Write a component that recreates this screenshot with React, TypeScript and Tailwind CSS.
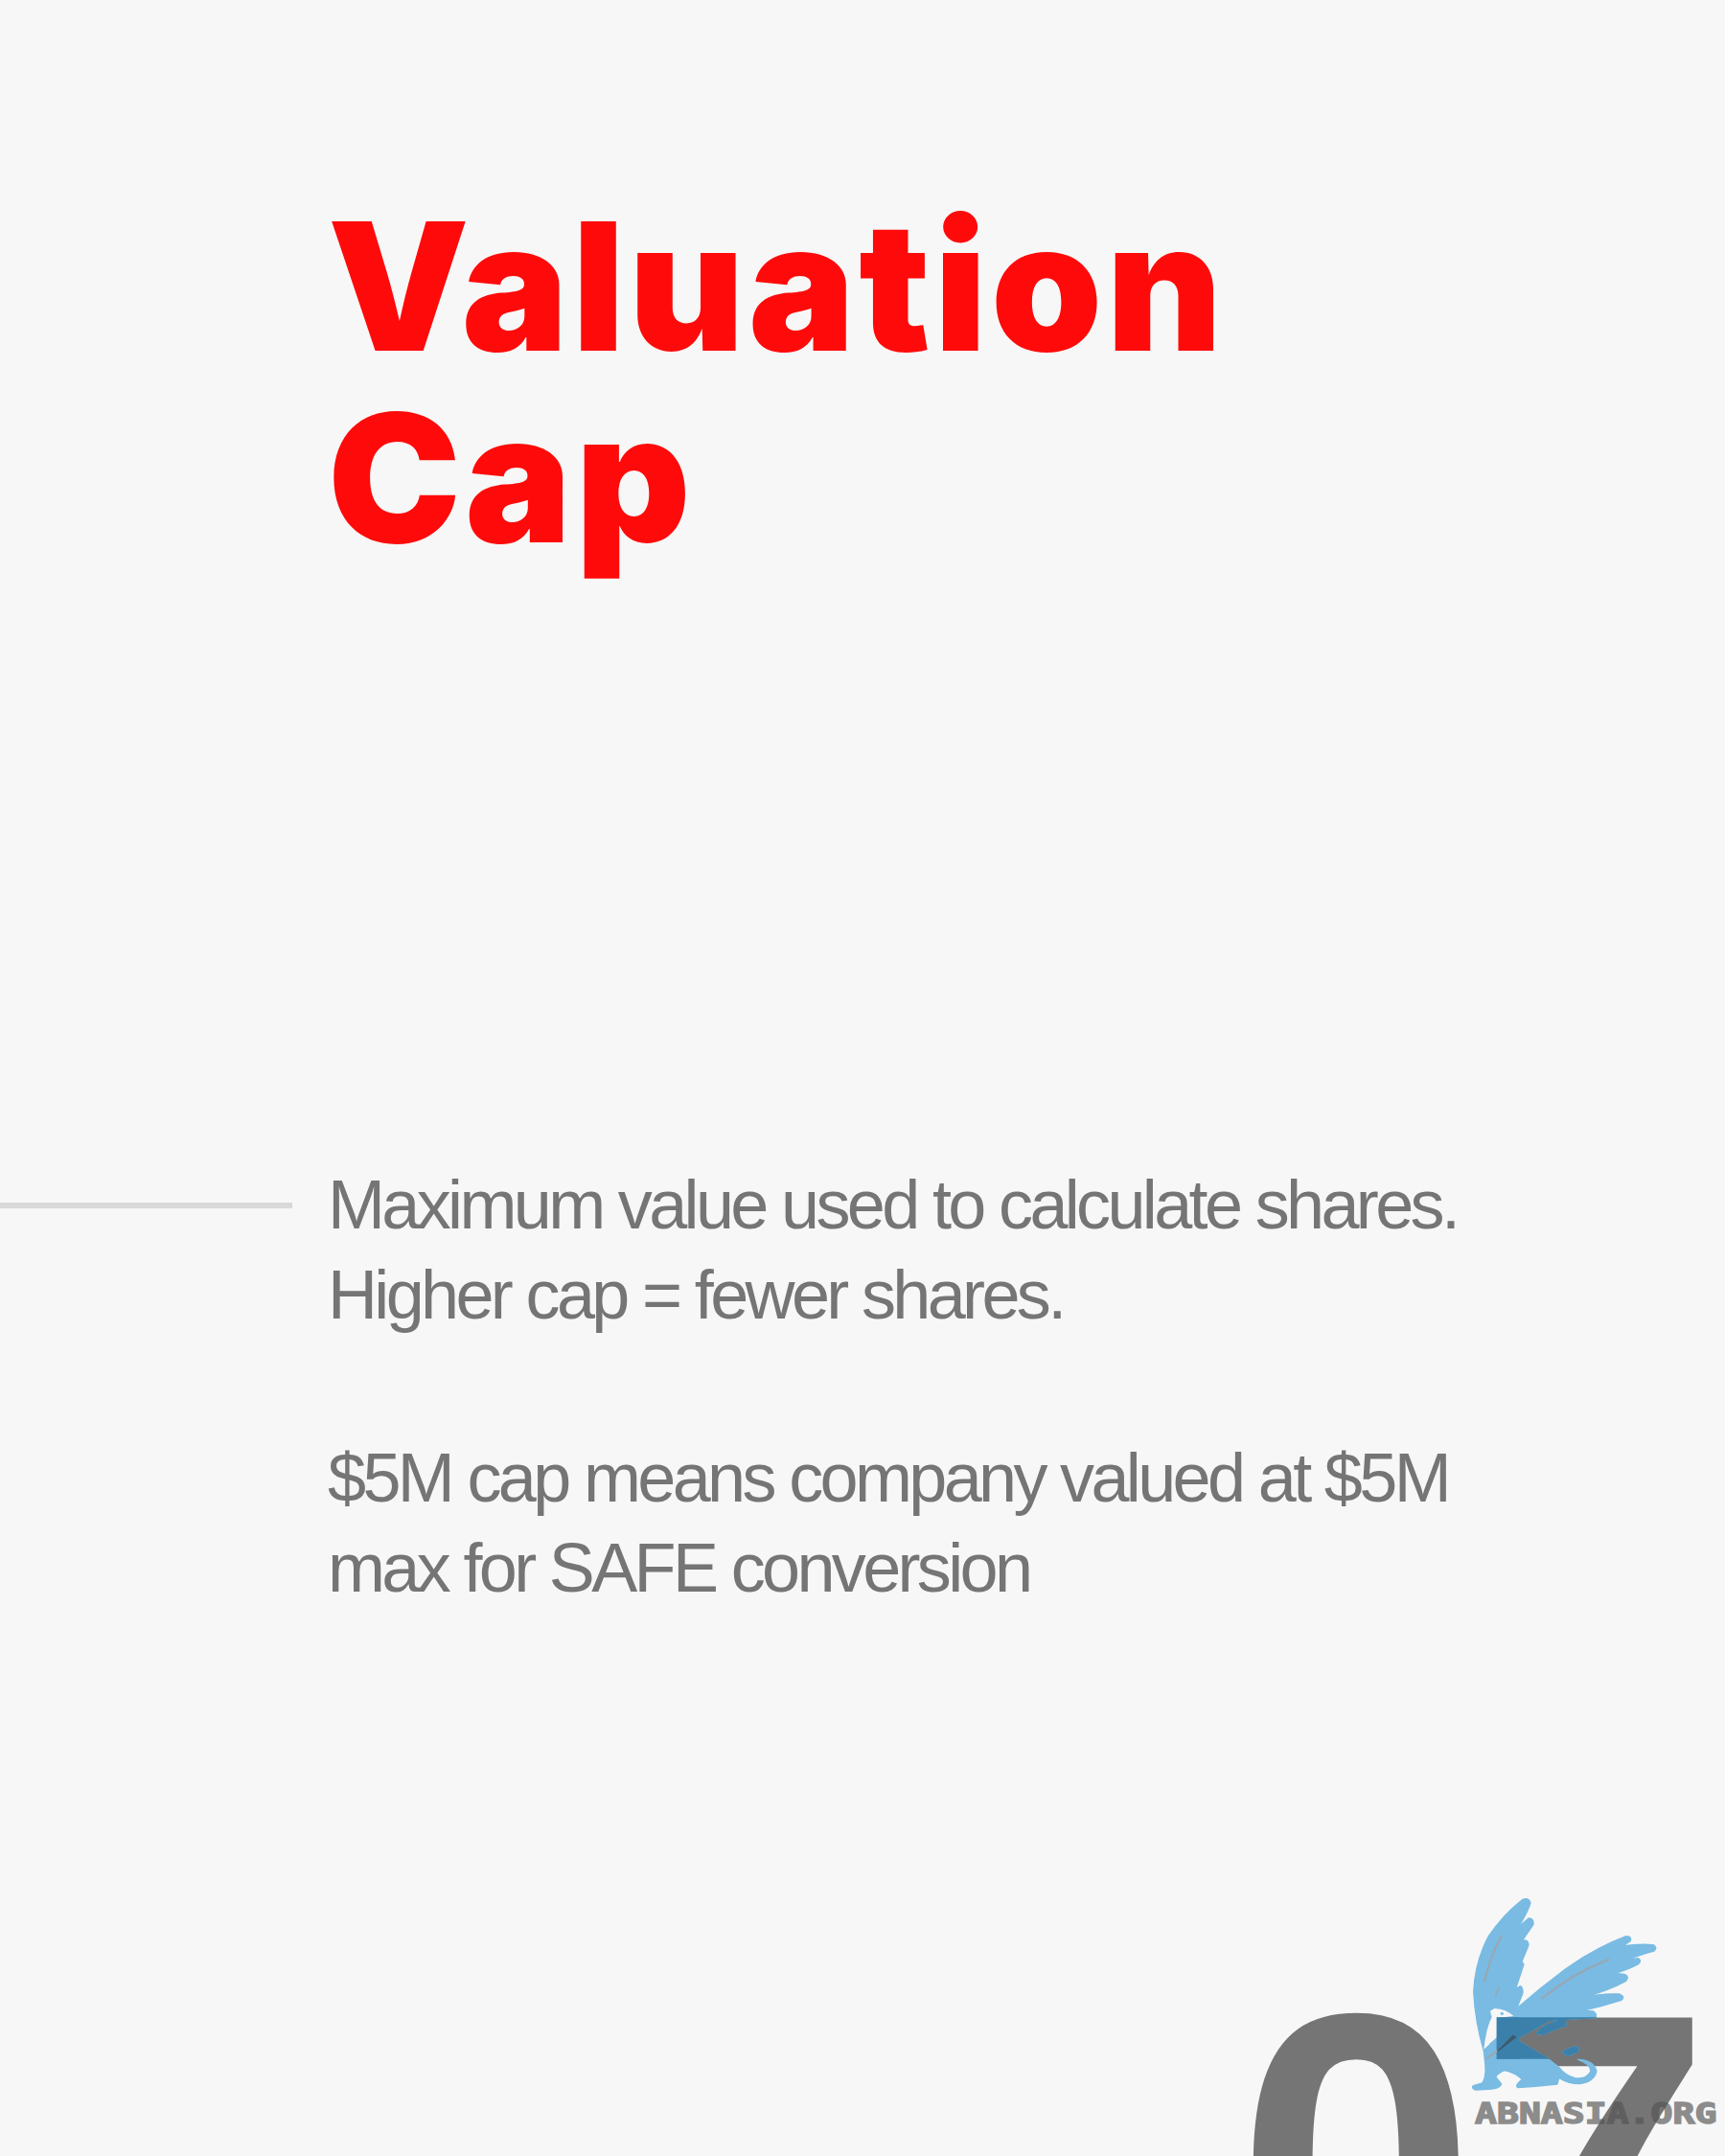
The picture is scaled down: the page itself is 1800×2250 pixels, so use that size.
const griffin =
  "M805 572 Q778 480 773 385 Q778 290 820 212 Q865 145 925 98 Q945 88 951 108 Q945 130 914 183 L945 156 Q962 155 960 175 L925 226 Q945 220 945 240 L924 291 L930 300 L905 376 L920 368 Q930 375 926 392 L908 438 Q980 375 1060 315 Q1150 250 1250 212 Q1268 212 1264 226 L1240 243 Q1290 235 1335 239 Q1350 248 1338 258 Q1300 268 1252 286 L1288 281 Q1300 288 1290 298 Q1260 315 1215 328 L1245 331 Q1262 338 1250 352 Q1190 385 1105 406 Q1170 390 1230 393 Q1248 400 1236 412 Q1180 430 1115 445 L1148 447 Q1160 455 1155 467 L1010 475 L905 535 L1005 595 L1040 622 Q1060 648 1090 656 Q1125 662 1140 635 Q1140 612 1100 598 Q1150 600 1158 635 Q1150 668 1105 674 Q1070 674 1040 655 L1035 675 Q970 682 912 686 Q900 680 925 660 Q905 640 870 632 Q850 640 842 652 L860 675 Q855 688 830 690 L780 693 Q765 688 772 680 L800 672 Q815 650 808 600 Z";

function Griffin({ fill }: { fill: string }) {
  return (
    <g fill={fill} stroke={fill} strokeWidth="4" strokeLinejoin="round">
      <path d={griffin} />
      <path d="M970 516 Q985 490 1060 470 L1062 492 Q1020 505 990 520 Z" />
      <path d="M1050 576 Q1075 558 1100 558 L1102 570 Q1085 582 1068 586 Z" />
    </g>
  );
}

export default function App() {
  return (
    <div className="relative w-[1800px] h-[2250px] overflow-hidden bg-[#f7f7f7] font-['Liberation_Sans',sans-serif]">
      <h1 className="ml-[342px] pt-[199px] text-[186px] leading-[200px] font-black font-['Inter',sans-serif] tracking-[4.2px] text-[#ff0a0a]">
        Valuation
        <br />
        Cap
      </h1>

      <div className="mt-[611px] flex items-start">
        <div className="mt-[45px] h-[6px] w-[305px] shrink-0 bg-[#d9d9d9]" />
        <div className="ml-[37px] text-[72px] leading-[94px] tracking-[-3.65px] text-[#757575]">
          <p>
            Maximum value used to calculate shares.
            <br />
            Higher cap = fewer shares.
          </p>
          <p className="mt-[97px]">
            $5M cap means company valued at $5M
            <br />
            max for SAFE conversion
          </p>
        </div>
      </div>

      {/* page number, runs off the bottom edge */}
      <div className="absolute left-[1290px] top-[2034px] text-[450px] leading-none font-bold tracking-[-5px] text-[#757575]">
        07
      </div>

      {/* watermark logo */}
      <svg
        className="absolute left-[1280px] top-[1950px] h-[300px] w-[520px]"
        viewBox="0 0 1560 900"
      >
        <defs>
          <clipPath id="seven-bar">
            <rect x="845" y="466" width="634" height="130" />
          </clipPath>
        </defs>
        <Griffin fill="#79bbe3" />
        <path d="M825 446 L838 438 Q875 440 898 462 L846 468 L846 528 L805 566 Q812 500 830 465 Z" fill="#f7f7f7" />
        <path d="M822 548 L846 532 L846 545 L832 556 Z" fill="#79bbe3" />
        <path d="M806 574 L846 548 L846 600 L808 600 Z" fill="#79bbe3" />
        <g clipPath="url(#seven-bar)">
          <rect x="845" y="466" width="70" height="130" fill="#3b80aa" />
          <Griffin fill="#3b80aa" />
          <path d="M846 574 L896 522 L906 528 Z" fill="#3f5a6c" stroke="#3f5a6c" strokeWidth="3" strokeLinejoin="round" />
        </g>
        <g fill="none" strokeLinecap="round" stroke="#9aa6b0">
          <path d="M860 212 Q825 275 808 352" strokeWidth="6" />
          <path d="M852 372 L842 398" strokeWidth="5" />
          <path d="M1195 285 Q1080 330 988 406" strokeWidth="6" />
          <path d="M845 572 L812 596" strokeWidth="6" />
        </g>
        <circle cx="862" cy="454" r="5" fill="#79bbe3" />
      </svg>
      <div className="absolute left-[1539px] top-[2188px] origin-left scale-x-[1.27] text-[30px] leading-[36px] font-bold font-['DejaVu_Sans_Mono',monospace] text-[#545454] opacity-65 [-webkit-text-stroke:1.5px_#545454]">
        ABNASIA.ORG
      </div>
    </div>
  );
}
